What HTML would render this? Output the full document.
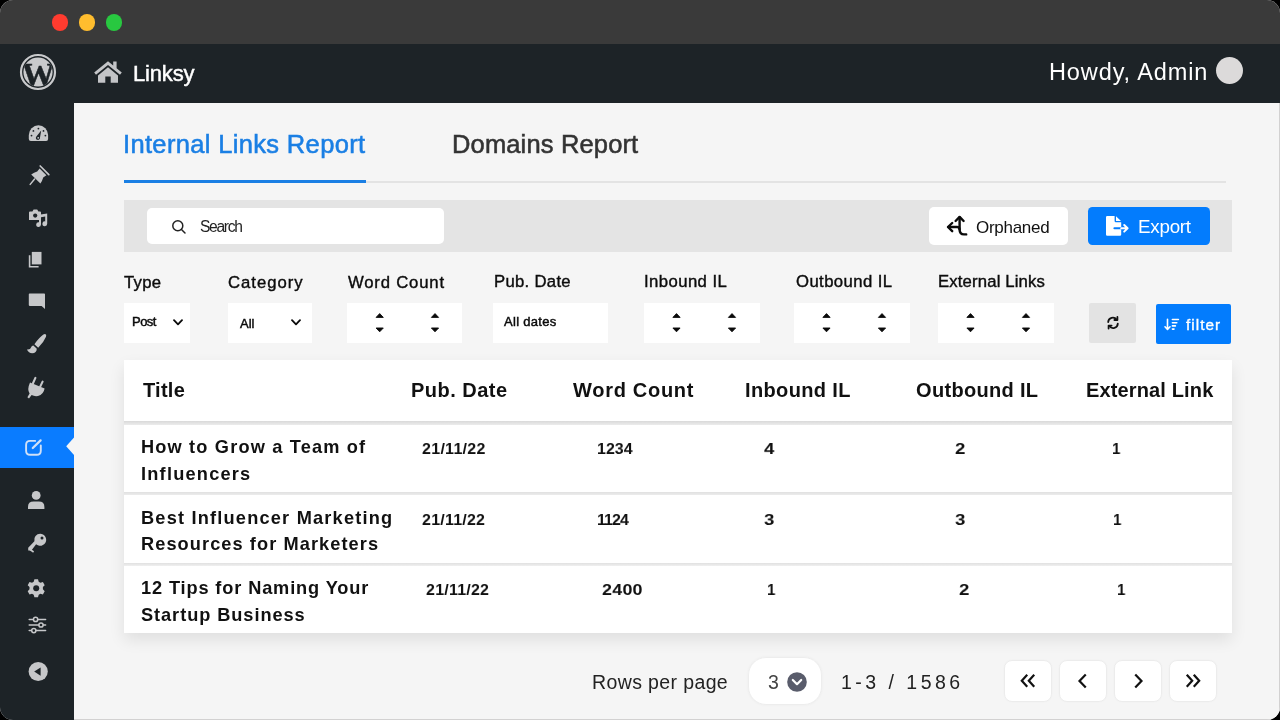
<!DOCTYPE html>
<html lang="en">
<head>
<meta charset="utf-8">
<title>Linksy – Internal Links Report</title>
<style>
*{box-sizing:border-box;margin:0;padding:0}
html,body{width:1280px;height:720px;overflow:hidden;background:#000}
body{font-family:"Liberation Sans",sans-serif;color:#111}
.abs{position:absolute}
#win{position:absolute;left:0;top:0;width:1280px;height:720px;border-radius:13px;overflow:hidden;background:#f5f5f5}
#titlebar{left:0;top:0;width:1280px;height:44px;background:#3a3a3a}
.tl{position:absolute;top:14.2px;width:16.4px;height:16.4px;border-radius:50%}
#adminbar{left:0;top:44px;width:1280px;height:59px;background:#1d2327}
#sidebar{left:0;top:103px;width:74px;height:617px;background:#1d2327}
#content{left:74px;top:103px;width:1206px;height:617px;background:#f5f5f5}
.pop{font-family:"Liberation Sans",sans-serif}
.t{position:absolute;white-space:nowrap;line-height:1;will-change:transform}
svg{position:absolute;overflow:visible;will-change:transform}
.box{position:absolute;background:#fff}

.lbl{font-size:16.7px;color:#0c0c0c;letter-spacing:.3px;-webkit-text-stroke:0.4px #0c0c0c}
.sm{font-size:13px;color:#0a0a0a;-webkit-text-stroke:0.45px #0a0a0a}
.th{font-size:20px;font-weight:bold;color:#111}
.tt{font-size:18.2px;font-weight:bold;color:#111;letter-spacing:.7px}
.td{font-size:16px;transform:scaleY(.92);transform-origin:0 0;font-weight:bold;color:#111}
.pg{top:660px;width:47.6px;height:41.5px;border-radius:8px;border:1px solid #ececec;box-shadow:0 0 2px rgba(0,0,0,.03)}
</style>
</head>
<body>
<div id="win">
  <div id="titlebar" class="abs">
    <div class="tl" style="left:52px;background:#ff3b2f"></div>
    <div class="tl" style="left:79px;background:#ffbd2e"></div>
    <div class="tl" style="left:106px;background:#28c840"></div>
  </div>

  <div id="adminbar" class="abs"></div>
  <div id="sidebar" class="abs"></div>
  <div id="content" class="abs"></div>

  <div class="abs" style="left:1279px;top:103px;width:1px;height:617px;background:#d2d1d1"></div>
  <div class="abs" style="left:74px;top:719px;width:1206px;height:1px;background:#d2d1d1"></div>
  <!-- ADMIN BAR CONTENT -->
  <svg style="left:20px;top:54px" width="36" height="36" viewBox="0 0 36 36">
    <defs><clipPath id="wpc"><circle cx="18" cy="18" r="14.6"/></clipPath></defs>
    <circle cx="18" cy="18" r="17" fill="none" stroke="#c9cacc" stroke-width="2.2"/>
    <circle cx="18" cy="18" r="14.6" fill="#c9cacc"/>
    <g clip-path="url(#wpc)"><text x="18.2" y="31.6" text-anchor="middle" font-family="Liberation Serif, serif" font-weight="bold" font-size="33" fill="#1d2327" stroke="#1d2327" stroke-width="0.5" textLength="33" lengthAdjust="spacingAndGlyphs">W</text></g>
  </svg>
  <svg style="left:93px;top:60px" width="30" height="24" viewBox="0 0 30 24">
    <path d="M15 1.2 L1.2 12.6 L3 14.8 L15 4.9 L27 14.8 L28.8 12.6 L23.6 8.3 V1.6 H20.2 V5.5 Z" fill="#c3c4c7"/>
    <path d="M15 7.2 L5 15.4 V22.8 H12.3 V16.6 H17.7 V22.8 H25 V15.4 Z" fill="#c3c4c7"/>
  </svg>
  <div class="t" id="linksy" style="left:133px;top:63px;font-size:22px;color:#fff;font-weight:normal;-webkit-text-stroke:0.45px #fff;letter-spacing:-0.18px">Linksy</div>
  <div class="t pop" id="howdy" style="left:1048.6px;top:61px;font-size:23.5px;color:#fff;letter-spacing:0.90px">Howdy, Admin</div>
  <div class="abs" style="left:1216px;top:57px;width:27px;height:27px;border-radius:50%;background:#dcdada"></div>

  <!-- TABS -->
  <div class="t" id="tab1" style="left:123.2px;top:132px;font-size:25.5px;color:#1a7fe4;-webkit-text-stroke:0.55px #1a7fe4;letter-spacing:0.34px">Internal Links Report</div>
  <div class="t" id="tab2" style="left:452px;top:132px;font-size:25.5px;color:#333;-webkit-text-stroke:0.55px #333;letter-spacing:0.15px">Domains Report</div>
  <div class="abs" style="left:124px;top:181px;width:1102px;height:2px;background:#e3e3e3"></div>
  <div class="abs" style="left:124px;top:180px;width:242px;height:3px;background:#1a7fe4"></div>

  <!-- TOOLBAR -->
  <div class="abs" style="left:124px;top:200px;width:1108.4px;height:52px;background:#e4e4e4"></div>
  <div class="box" style="left:147px;top:208px;width:297px;height:36px;border-radius:5px"></div>
  <svg style="left:171px;top:219px" width="16" height="16" viewBox="0 0 16 16"><circle cx="6.8" cy="6.8" r="5" fill="none" stroke="#222" stroke-width="1.5"/><path d="M10.5 10.5 L14 14" stroke="#222" stroke-width="1.5" stroke-linecap="round"/></svg>
  <div class="t" id="search" style="left:200px;top:219px;font-size:15.6px;color:#222;letter-spacing:-1.32px">Search</div>

  <div class="box" style="left:929px;top:206.6px;width:139px;height:38px;border-radius:5px"></div>
  <div class="t" id="orph" style="left:976px;top:219px;font-size:17px;color:#111;letter-spacing:-0.29px">Orphaned</div>
  <div class="abs" style="left:1088px;top:206.6px;width:122px;height:38px;border-radius:4.5px;background:#037cfd"></div>
  <div class="t" id="export" style="left:1138px;top:218px;font-size:18.8px;color:#fff;letter-spacing:-0.24px">Export</div>

  <!-- FILTER LABELS -->
  <div class="t pop lbl" id="l1" style="left:124px;top:275px">Type</div>
  <div class="t pop lbl" id="l2" style="left:228px;top:275px;letter-spacing:0.98px">Category</div>
  <div class="t pop lbl" id="l3" style="left:348px;top:275px;letter-spacing:0.81px">Word Count</div>
  <div class="t pop lbl" id="l4" style="left:494px;top:274px">Pub. Date</div>
  <div class="t pop lbl" id="l5" style="left:644.2px;top:274px;letter-spacing:0.43px">Inbound IL</div>
  <div class="t pop lbl" id="l6" style="left:796px;top:274px;letter-spacing:0.42px">Outbound IL</div>
  <div class="t pop lbl" id="l7" style="left:938px;top:274px;letter-spacing:0.16px">External Links</div>

  <!-- FILTER BOXES -->
  <div class="box" style="left:124px;top:303px;width:66px;height:40px"></div>
  <div class="t pop sm" id="f1" style="left:131.8px;top:315px;letter-spacing:-0.54px">Post</div>
  <svg class="chev" style="left:172.6px;top:318.7px" width="10" height="7" viewBox="0 0 10 7"><path d="M1 1.2 L5 5.4 L9 1.2" fill="none" stroke="#0a0a0a" stroke-width="1.8" stroke-linecap="round" stroke-linejoin="round"/></svg>

  <div class="box" style="left:228px;top:303px;width:84px;height:40px"></div>
  <div class="t pop sm" id="f2" style="left:240px;top:317px">All</div>
  <svg class="chev" style="left:291.3px;top:318.7px" width="10" height="7" viewBox="0 0 10 7"><path d="M1 1.2 L5 5.4 L9 1.2" fill="none" stroke="#0a0a0a" stroke-width="1.8" stroke-linecap="round" stroke-linejoin="round"/></svg>

  <div class="box" style="left:347px;top:303px;width:115px;height:40px"></div>
  <div class="box" style="left:493px;top:303px;width:115px;height:40px"></div>
  <div class="t pop sm" id="f4" style="left:504px;top:315px;font-size:13px;letter-spacing:0.3px">All dates</div>
  <div class="box" style="left:644px;top:303px;width:116px;height:40px"></div>
  <div class="box" style="left:794px;top:303px;width:116px;height:40px"></div>
  <div class="box" style="left:938px;top:303px;width:116px;height:40px"></div>

  <svg style="left:0;top:0" width="1280" height="720" viewBox="0 0 1280 720">
    <defs><g id="spin"><path d="M-3.6 1.9 L0 -1.9 L3.6 1.9 Z" transform="translate(0,315.5)" fill="#0a0a0a" stroke="#0a0a0a" stroke-width="0.9" stroke-linejoin="round"/><path d="M-3.6 -1.9 L0 1.9 L3.6 -1.9 Z" transform="translate(0,329.9)" fill="#0a0a0a" stroke="#0a0a0a" stroke-width="0.9" stroke-linejoin="round"/></g></defs>
    <use href="#spin" x="379.7"/><use href="#spin" x="435"/>
    <use href="#spin" x="676.5"/><use href="#spin" x="732"/>
    <use href="#spin" x="826.5"/><use href="#spin" x="882"/>
    <use href="#spin" x="970.5"/><use href="#spin" x="1026"/>
  </svg>

  <div class="abs" style="left:1089px;top:303px;width:47px;height:40px;background:#e3e3e3;border-radius:2px"></div>
  <div class="abs" style="left:1156px;top:304px;width:75px;height:40px;background:#037cfd;border-radius:2px"></div>
  <div class="t pop" id="filt" style="left:1186px;top:316.8px;font-size:15.3px;color:#fff;letter-spacing:1.04px;-webkit-text-stroke:0.35px #fff">filter</div>

  <!-- TABLE -->
  <div class="abs" style="left:124px;top:360px;width:1108px;height:273px;background:#e6e6e6;box-shadow:0 7px 15px rgba(0,0,0,.09)"></div>
  <div class="abs" style="left:124px;top:421px;width:1108px;height:4px;background:linear-gradient(#d9d9d9,#ececec)"></div>
  <div class="abs" style="left:124px;top:492px;width:1108px;height:4px;background:linear-gradient(#e0e0e0,#f0f0f0)"></div>
  <div class="abs" style="left:124px;top:563px;width:1108px;height:3px;background:linear-gradient(#e0e0e0,#f0f0f0)"></div>
  <div class="box" style="left:124px;top:360px;width:1108px;height:61px"></div>
  <div class="box" style="left:124px;top:425px;width:1108px;height:67.4px"></div>
  <div class="box" style="left:124px;top:495px;width:1108px;height:68.2px"></div>
  <div class="box" style="left:124px;top:565.6px;width:1108px;height:67.6px"></div>

  <div class="t pop th" id="h1" style="left:143px;top:380px;letter-spacing:0.25px">Title</div>
  <div class="t pop th" id="h2" style="left:411px;top:380px;letter-spacing:0.48px">Pub. Date</div>
  <div class="t pop th" id="h3" style="left:573px;top:380px;letter-spacing:0.71px">Word Count</div>
  <div class="t pop th" id="h4" style="left:745px;top:380px;letter-spacing:0.36px">Inbound IL</div>
  <div class="t pop th" id="h5" style="left:916px;top:380px;letter-spacing:0.32px">Outbound IL</div>
  <div class="t pop th" id="h6" style="left:1086.0px;top:380px;letter-spacing:0.14px">External Link</div>

  <div class="t pop tt" id="r1a" style="left:141px;top:438px;letter-spacing:1.17px">How to Grow a Team of</div>
  <div class="t pop tt" id="r1b" style="left:141px;top:465px;letter-spacing:1.22px">Influencers</div>
  <div class="t pop tt" id="r2a" style="left:141px;top:509px;letter-spacing:1.20px">Best Influencer Marketing</div>
  <div class="t pop tt" id="r2b" style="left:141px;top:535px;letter-spacing:1.08px">Resources for Marketers</div>
  <div class="t pop tt" id="r3a" style="left:141px;top:579px;letter-spacing:0.87px">12 Tips for Naming Your</div>
  <div class="t pop tt" id="r3b" style="left:141px;top:606px;letter-spacing:0.94px">Startup Business</div>

  <div class="t pop td" id="d1" style="left:422px;top:442px;letter-spacing:0.29px">21/11/22</div>
  <div class="t pop td" id="w1" style="left:597px;top:442px;letter-spacing:-0.01px">1234</div>
  <div class="t pop td" id="i1" style="left:764px;top:442px;transform:scale(1.17,.92);transform-origin:0 0">4</div>
  <div class="t pop td" id="o1" style="left:955px;top:442px;transform:scale(1.17,.92);transform-origin:0 0">2</div>
  <div class="t pop td" id="e1" style="left:1112.2px;top:442px;transform:scale(.94,.92);transform-origin:0 0">1</div>

  <div class="t pop td" id="d2" style="left:422px;top:513px;letter-spacing:0.23px">21/11/22</div>
  <div class="t pop td" id="w2" style="left:597px;top:513px;letter-spacing:-0.94px">1124</div>
  <div class="t pop td" id="i2" style="left:764px;top:513px;transform:scale(1.17,.92);transform-origin:0 0">3</div>
  <div class="t pop td" id="o2" style="left:955px;top:513px;transform:scale(1.17,.92);transform-origin:0 0">3</div>
  <div class="t pop td" id="e2" style="left:1113px;top:513px;transform:scale(.94,.92);transform-origin:0 0">1</div>

  <div class="t pop td" id="d3" style="left:426px;top:583px;letter-spacing:0.23px">21/11/22</div>
  <div class="t pop td" id="w3" style="left:601.8px;top:583px;letter-spacing:0.2px;transform:scale(1.12,.92);transform-origin:0 0">2400</div>
  <div class="t pop td" id="i3" style="left:767px;top:583px;transform:scale(.94,.92);transform-origin:0 0">1</div>
  <div class="t pop td" id="o3" style="left:959px;top:583px;transform:scale(1.17,.92);transform-origin:0 0">2</div>
  <div class="t pop td" id="e3" style="left:1117px;top:583px;transform:scale(.94,.92);transform-origin:0 0">1</div>

  <!-- PAGINATION -->
  <div class="t" id="rpp" style="left:592px;top:673px;font-size:19.5px;color:#222;letter-spacing:0.38px">Rows per page</div>
  <div class="box" style="left:747.5px;top:657px;width:74px;height:47.5px;border-radius:18px;border:1px solid #ededed;box-shadow:0 0 3px rgba(0,0,0,.04)"></div>
  <div class="t" id="three" style="left:768.0px;top:673px;font-size:19.5px;color:#444">3</div>
  <svg style="left:787px;top:672px" width="20" height="20" viewBox="0 0 20 20"><circle cx="10" cy="10" r="9.8" fill="#595c6b"/><path d="M5.8 8 L10 12.2 L14.2 8" fill="none" stroke="#fff" stroke-width="2.2" stroke-linecap="round" stroke-linejoin="round"/></svg>
  <div class="t" id="range" style="left:841px;top:673px;font-size:19.5px;color:#222;letter-spacing:3.48px">1-3 / 1586</div>

  <div class="box pg" style="left:1004px"></div>
  <div class="box pg" style="left:1059.2px"></div>
  <div class="box pg" style="left:1114.2px"></div>
  <div class="box pg" style="left:1169.2px"></div>
  <svg style="left:0;top:0" width="1280" height="720" viewBox="0 0 1280 720" fill="none" stroke="#111" stroke-width="2.2" stroke-linecap="square" stroke-linejoin="miter">
    <path d="M1026.5 675.5 L1021.8 680.8 L1026.5 686"/><path d="M1033.5 675.5 L1028.8 680.8 L1033.5 686"/>
    <path d="M1085 675.3 L1079.5 681 L1085 686.8"/>
    <path d="M1136 675.3 L1141.5 681 L1136 686.8"/>
    <path d="M1187.5 675.5 L1192.2 680.8 L1187.5 686"/><path d="M1194.5 675.5 L1199.2 680.8 L1194.5 686"/>
  </svg>

  <!-- SIDEBAR ICONS -->
  <div class="abs" style="left:0;top:426.5px;width:74px;height:41.5px;background:#0a7cff"></div>
  <svg style="left:0;top:0" width="80" height="720" viewBox="0 0 80 720" fill="#c6c7c9">
    <!-- dashboard -->
    <g id="ic-dash">
      <path d="M28.8 135 A9.65 9.7 0 0 1 48.1 135 V139 Q48.1 141 46.1 141 H30.8 Q28.8 141 28.8 139 Z"/>
      <g fill="#1d2327">
        <circle cx="31.5" cy="135.6" r="0.9"/><circle cx="33.4" cy="130.9" r="0.9"/><circle cx="38.4" cy="128.6" r="0.9"/><circle cx="43.5" cy="130.9" r="0.9"/><circle cx="45.4" cy="135.6" r="0.9"/>
        <path d="M41.2 130.6 L40 137.4 A2.1 2.1 0 1 1 36.4 136.4 Z"/>
      </g>
      <circle cx="38.2" cy="137.8" r="0.9"/>
    </g>
    <!-- pin -->
    <g id="ic-pin">
      <path d="M40.2 166 L48.8 174.6" stroke="#c6c7c9" stroke-width="1.7" stroke-linecap="round" fill="none"/>
      <path d="M39.6 168.4 L46.4 175.2 L43.2 177.6 Q42.4 180.8 40.4 183.6 L31.2 174.4 Q34 172.6 37.2 171.6 Z"/>
      <path d="M34.6 179 L30.2 184.4" stroke="#c6c7c9" stroke-width="1.5" stroke-linecap="round" fill="none"/>
    </g>
    <!-- media -->
    <g id="ic-media">
      <path d="M29 212.4 Q29 211.4 30 211.4 H32.4 L33.6 209.5 H37.2 L38.4 211.4 H40 Q41 211.4 41 212.4 V220 H29 Z"/>
      <circle cx="35.2" cy="215.6" r="2.1" fill="#1d2327"/>
      <path d="M39 214.8 L47.2 213.4 V223.8 A2.4 2.4 0 1 1 45.2 221.4 V216.4 L41 217.2 V224.6 A2.4 2.4 0 1 1 39 222.2 Z"/>
    </g>
    <!-- pages -->
    <g id="ic-pages">
      <path d="M31.8 251.9 H41.5 V264.4 H31.8 Z"/>
      <path d="M28.8 255.2 H30.4 V265.9 H38.6 V267.5 H28.8 Z"/>
    </g>
    <!-- comment -->
    <path d="M29.6 293.5 H44.2 Q45 293.5 45 294.3 V309 L41.6 305.9 H29.6 Q28.8 305.9 28.8 305.1 V294.3 Q28.8 293.5 29.6 293.5 Z"/>
    <!-- brush -->
    <g id="ic-brush">
      <path d="M45.2 334 Q46.8 334.6 46 336.8 Q43.6 342.6 38.2 347.8 L34.4 344.2 Q39.2 337.6 43.4 334.6 Q44.4 333.8 45.2 334 Z"/>
      <path d="M33.4 345.6 L36.8 348.8 Q36.6 353.2 32.2 353.2 Q28.6 353 26.9 349.4 Q30.4 349.8 31 347.6 Q31.6 345.8 33.4 345.6 Z"/>
    </g>
    <!-- plug -->
    <g id="ic-plug">
      <path d="M35.4 377.9 L33 383.2" stroke="#c6c7c9" stroke-width="2.1" stroke-linecap="round" fill="none"/>
      <path d="M42.6 381.6 L40.2 386.6" stroke="#c6c7c9" stroke-width="2.1" stroke-linecap="round" fill="none"/>
      <path d="M30 382.4 L44.6 388.6 Q43.6 394.6 38 396 Q34.4 396.6 31.6 395 L29 398.4 L27.4 397.2 L29.6 393.4 Q26.8 389.6 30 382.4 Z"/>
    </g>
    <!-- active edit icon -->
    <g fill="none" stroke="#cfe0f7" stroke-width="1.9" stroke-linecap="round" stroke-linejoin="round">
      <path d="M35.2 440.9 H30.2 Q26.1 440.9 26.1 445 V450.7 Q26.1 454.8 30.2 454.8 H36.7 Q40.8 454.8 40.8 450.7 V445.4"/>
      <path d="M32.8 448 L40.6 440.4" stroke-width="2.3"/>
    </g>
    <path d="M74 437.4 L66.2 446.2 L74 455 Z" fill="#f5f5f5"/>
    <!-- user -->
    <circle cx="36.2" cy="495.4" r="4.4"/>
    <path d="M28 509 V507 Q28 501.6 33.6 501.6 H38.8 Q44.4 501.6 44.4 507 V509 Z"/>
    <!-- key -->
    <g id="ic-key">
      <path d="M40.2 533.8 A6 6 0 1 1 36.1 544.2 L31.4 550.6 H28.2 V547.8 L34.4 541.2 A6 6 0 0 1 40.2 533.8 Z"/>
      <path d="M30 549.5 L33.6 552" stroke="#c6c7c9" stroke-width="1.6" fill="none"/>
      <circle cx="42" cy="538" r="1.5" fill="#1d2327"/>
    </g>
    <!-- gear -->
    <g id="ic-gear" transform="translate(36.2,588.2)">
      <path d="M-1.8 -9.2 H1.8 L2.5 -6.7 L4.2 -5.7 L6.7 -6.4 L8.5 -3.2 L6.7 -1.4 V0.9 L8.5 2.8 L6.7 6 L4.2 5.3 L2.5 6.3 L1.8 8.8 H-1.8 L-2.5 6.3 L-4.2 5.3 L-6.7 6 L-8.5 2.8 L-6.7 0.9 V-1.4 L-8.5 -3.2 L-6.7 -6.4 L-4.2 -5.7 L-2.5 -6.7 Z" transform="translate(0,0.2)"/>
      <circle cx="0" cy="0" r="3" fill="#1d2327"/>
    </g>
    <!-- sliders -->
    <g fill="none" stroke="#c6c7c9" stroke-width="1.5" stroke-linecap="round">
      <path d="M29.2 619.4 H45.6 M29.2 625 H45.6 M29.2 630.6 H45.6"/>
      <circle cx="35.6" cy="619.4" r="2.1" fill="#1d2327"/><circle cx="41" cy="625" r="2.1" fill="#1d2327"/><circle cx="33.8" cy="630.6" r="2.1" fill="#1d2327"/>
    </g>
    <!-- collapse -->
    <circle cx="38.2" cy="671.5" r="9.6"/>
    <path d="M40.6 667.4 V675.8 L34.2 671.6 Z" fill="#1d2327"/>
  </svg>

  <!-- toolbar icons -->
  <svg style="left:940px;top:208px" width="40" height="36" viewBox="940 208 40 36" fill="none" stroke="#0a0a0a" stroke-width="2.4" stroke-linecap="round" stroke-linejoin="round">
    <path d="M959.6 217.4 V229.6 Q959.6 234.4 964 234.4 H966.2"/>
    <path d="M955.6 221 L959.6 216.9 L963.6 221"/>
    <path d="M948.4 227 H957 Q959.4 227 959.6 229.4"/>
    <path d="M952.2 223 L948 227 L952.2 231.2"/>
  </svg>
  <svg style="left:1098px;top:208px" width="40" height="36" viewBox="1098 208 40 36">
    <path d="M1107.2 216 H1114.6 V221 Q1114.6 222.2 1115.8 222.2 H1121.2 V234.6 Q1121.2 235.8 1120 235.8 H1107.2 Q1106 235.8 1106 234.6 V217.2 Q1106 216 1107.2 216 Z" fill="#fff"/>
    <path d="M1116 216.2 L1121 221 H1116 Z" fill="#fff"/>
    <path d="M1114.4 228.3 H1121.2" stroke="#037cfd" stroke-width="2" fill="none" stroke-linecap="round"/>
    <path d="M1121.2 228.3 H1127 M1124.2 225 L1127.6 228.3 L1124.2 231.6" fill="none" stroke="#fff" stroke-width="2" stroke-linecap="round" stroke-linejoin="round"/>
  </svg>
  <!-- refresh icon -->
  <svg style="left:1106px;top:316px" width="14" height="14" viewBox="0 0 14 14" fill="none" stroke="#111" stroke-width="1.8" stroke-linecap="round" stroke-linejoin="round">
    <path d="M2.2 6 A4.6 4.6 0 0 1 10.6 3.6"/>
    <path d="M11.8 7.6 A4.6 4.6 0 0 1 3.4 10"/>
    <path d="M11.4 1 V4 H8.4"/><path d="M2.6 12.6 V9.6 H5.6"/>
  </svg>
  <!-- filter icon -->
  <svg style="left:1160px;top:314px" width="24" height="20" viewBox="1160 314 24 20" fill="none" stroke="#fff" stroke-width="1.6" stroke-linecap="round" stroke-linejoin="round">
    <path d="M1167.5 319.2 V329.2 M1165 326.8 L1167.5 329.5 L1170 326.8"/>
    <path d="M1172.4 319.5 H1178.4 M1172.4 322.7 H1176.8 M1172.4 325.9 H1175.4 M1172.4 329.1 H1174"/>
  </svg>
</div>
</body>
</html>
